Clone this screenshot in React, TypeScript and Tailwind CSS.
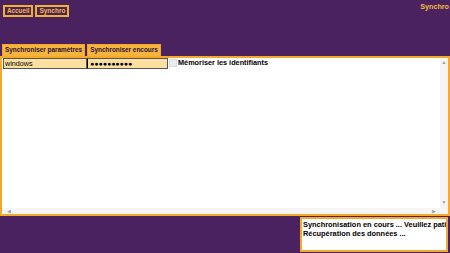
import React from "react";

const font = { fontFamily: '"Liberation Sans", Arial, sans-serif' };

export default function App() {
  return (
    <div
      className="w-[450px] h-[253px] bg-[#4a2260] flex flex-col overflow-hidden"
      style={font}
    >
      {/* header */}
      <div className="h-[44px] flex justify-between items-start">
        <div className="flex gap-[2px] pl-[3px] pt-[5px]">
          <button className="h-[12px] px-[2px] border-2 border-[#f0b030] text-[#f2bb3c] text-[6.3px] font-bold leading-none">
            Accueil
          </button>
          <button className="h-[12px] px-[2px] border-2 border-[#f0b030] text-[#f2bb3c] text-[6.5px] font-bold leading-none">
            Synchro
          </button>
        </div>
        <div className="pt-[3px] pr-[1px] text-[7.2px] font-bold text-[#f2bb3c] leading-none">
          Synchro
        </div>
      </div>

      {/* tabs */}
      <div className="h-[12px] flex gap-[2px] pl-[2px]">
        <div className="h-[12px] w-[83px] bg-[#f5b53c] border-t border-x border-[#f0a830] flex items-center justify-center text-[6.4px] font-bold text-[#2a1030]">
          Synchroniser paramètres
        </div>
        <div className="h-[12px] w-[74px] bg-[#f5b53c] border-t border-x border-[#f0a830] flex items-center justify-center text-[6.4px] font-bold text-[#2a1030]">
          Synchroniser encours
        </div>
      </div>

      {/* main panel */}
      <div className="h-[161px] border-2 border-[#f5a82a] bg-white flex flex-col">
        <div className="flex-1 flex">
          <div className="flex-1 pl-[1px]">
            <div className="flex items-center">
              <div className="w-[84px] h-[11px] bg-[#fde0a0] border border-[#555] text-[7.2px] leading-[9px] pl-[1px] text-black">
                windows
              </div>
              <div className="w-[81px] h-[11px] bg-[#fde0a0] border border-[#555] border-l-black text-[7px] leading-[9px] pl-[2px] text-black">
                ●●●●●●●●●●
              </div>
              <div className="w-[8px] h-[8px] bg-[#ececec] border border-[#dcdcdc] ml-[1px]" />
              <span className="text-[7.3px] font-bold text-black ml-[1px]">
                Mémoriser les identifiants
              </span>
            </div>
          </div>
          {/* vertical scrollbar */}
          <div className="w-[8px] bg-[#f4f4f4] flex flex-col items-center justify-between pt-[2px] pb-[3px] text-[#a0a0a0] text-[5px] leading-none">
            <span>▲</span>
            <span>▼</span>
          </div>
        </div>
        {/* horizontal scrollbar */}
        <div className="h-[6px] bg-[#f6f6f6] flex items-center justify-between pl-[5px] pr-[12px] text-[#a0a0a0] text-[5px] leading-none">
          <span>◀</span>
          <span>▶</span>
        </div>
      </div>

      {/* bottom */}
      <div className="flex-1 flex justify-end pt-[1px] pr-[2px] pb-[1px]">
        <div className="w-[148px] h-[35px] border-2 border-[#f5a82a] bg-white overflow-hidden pl-[1px] pt-[1px]">
          <p className="text-[7.4px] font-bold text-black leading-[9px] whitespace-nowrap">
            Synchronisation en cours ... Veuillez patienter
          </p>
          <p className="text-[7.4px] font-bold text-black leading-[9px] whitespace-nowrap">
            Récupération des données ...
          </p>
        </div>
      </div>
    </div>
  );
}
